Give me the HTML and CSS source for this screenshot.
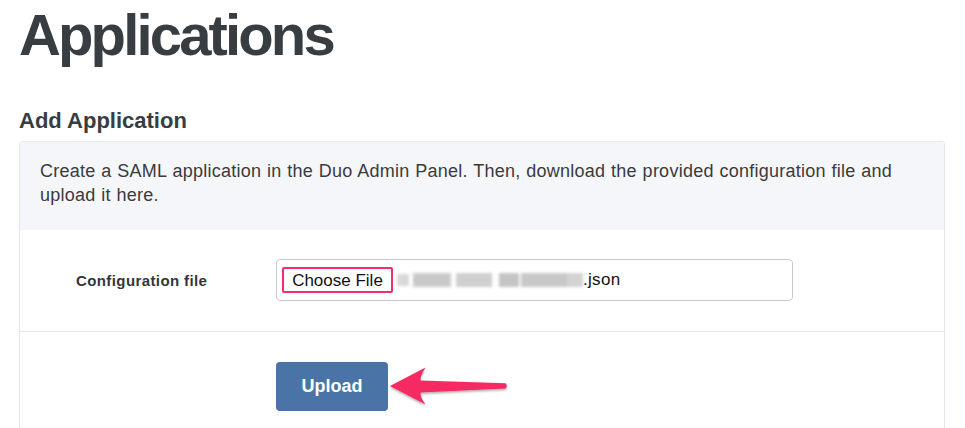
FILE: index.html
```html
<!DOCTYPE html>
<html lang="en">
<head>
<meta charset="utf-8">
<title>Applications</title>
<link rel="stylesheet" href="styles.css">
</head>
<body>
  <h1 class="page-title">Applications</h1>
  <h2 class="section-title">Add Application</h2>
  <div class="panel">
    <div class="panel-header">
      <p class="intro">Create a SAML application in the Duo Admin Panel. Then, download the provided configuration file and upload it here.</p>
    </div>
    <div class="form-row row-file">
      <label class="field-label">Configuration file</label>
      <div class="file-input">
        <span class="choose-btn">Choose File</span>
        <span class="file-name"><span class="blur-name"><i class="b1"></i><i class="b2"></i><i class="b3"></i><i class="b4"></i><i class="b5"></i><i class="b6"></i></span>.json</span>
      </div>
    </div>
    <div class="form-row row-submit">
      <div class="spacer"></div>
      <button class="upload-btn" type="button">Upload</button>
      <svg class="arrow" width="124" height="50" viewBox="386 362 124 50" aria-hidden="true">
        <defs>
          <filter id="sh" x="-20%" y="-30%" width="140%" height="160%">
            <feDropShadow dx="0" dy="1.5" stdDeviation="1.2" flood-color="#000" flood-opacity="0.35"/>
          </filter>
        </defs>
        <path d="M390,387 L425.5,368.5 Q420,377 420.5,381.5 L505.5,384.2 Q508,386.8 505.5,389.6 L420.5,393.5 Q420,398 425.5,405.5 Z" fill="#f52a63" filter="url(#sh)"/>
      </svg>
    </div>
  </div>
</body>
</html>
```

FILE: styles.css
```css
html, body {
  margin: 0;
  padding: 0;
  background: #ffffff;
}

body {
  padding: 0 20px 0 19px;
  font-family: "Liberation Sans", Arial, Helvetica, sans-serif;
  color: #3a3d40;
}

.page-title {
  margin: 0;
  padding-top: 3px;
  font-size: 58px;
  line-height: 64px;
  font-weight: 700;
  letter-spacing: -2.85px;
  color: #383d41;
}

.section-title {
  margin: 41px 0 7px;
  font-size: 22px;
  line-height: 26px;
  font-weight: 700;
  color: #383d41;
}

.panel {
  border: 1px solid #e4e7ed;
  border-radius: 3px;
  background: #ffffff;
}

.panel-header {
  background: #f4f6fa;
  padding: 17px 20px 23px;
}

.intro {
  margin: 0;
  font-size: 18px;
  line-height: 24px;
  letter-spacing: 0.25px;
  word-spacing: 0.5px;
  color: #3b3b3b;
}

.form-row {
  display: flex;
  align-items: center;
}

.row-file {
  padding: 29px 0 30px;
  border-bottom: 1px solid #e6e8ee;
}

.field-label {
  width: 256px;
  box-sizing: border-box;
  padding-left: 56px;
  font-size: 15px;
  font-weight: 700;
  letter-spacing: 0.4px;
  color: #333638;
}

.file-input {
  width: 517px;
  height: 42px;
  box-sizing: border-box;
  border: 1px solid #c9c9c9;
  border-radius: 4px;
  display: flex;
  align-items: center;
  padding-left: 5px;
  font-size: 17px;
  color: #111;
}

.choose-btn {
  box-sizing: border-box;
  width: 111px;
  height: 26px;
  border: 2px solid #f22e6c;
  border-radius: 2px;
  display: flex;
  align-items: center;
  justify-content: center;
  line-height: 1;
}

.file-name {
  display: flex;
  align-items: center;
  margin-left: 4px;
  letter-spacing: 0.3px;
}

.blur-name {
  display: flex;
  align-items: center;
  width: 186px;
  filter: blur(1.6px);
}

.blur-name i {
  display: block;
  height: 14px;
}

.blur-name .b1 { width: 12px; height: 12px; background: #d9d9d9; }
.blur-name .b2 { width: 38px; background: #c9c9c9; margin-left: 4px; }
.blur-name .b3 { width: 36px; background: #cfcfcf; margin-left: 5px; }
.blur-name .b4 { width: 20px; background: #c4c4c4; margin-left: 7px; }
.blur-name .b5 { width: 46px; background: #c8c8c8; margin-left: 2px; }
.blur-name .b6 { width: 16px; background: #d3d3d3; }

.row-submit {
  position: relative;
  padding: 30px 0 30px;
  align-items: flex-start;
}

.spacer {
  width: 256px;
}

.upload-btn {
  width: 112px;
  height: 49px;
  border: 0;
  border-radius: 4px;
  background: #4a74a7;
  color: #ffffff;
  font-family: "Liberation Sans", Arial, Helvetica, sans-serif;
  font-size: 18px;
  font-weight: 700;
  padding: 0;
}

.arrow {
  position: absolute;
  left: 366px;
  top: 29px;
}
```
